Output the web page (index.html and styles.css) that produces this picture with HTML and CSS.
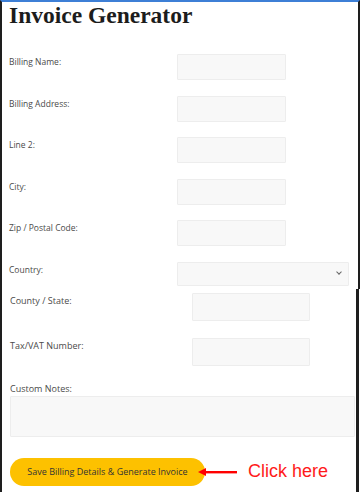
FILE: index.html
```html
<!DOCTYPE html>
<html lang="en">
<head>
    <meta charset="UTF-8">
    <meta name="viewport" content="width=device-width, initial-scale=1.0">
    <title>Invoice Generator</title>
    <link rel="stylesheet" href="styles.css">
</head>
<body>
    <div class="page">
        <section class="panel panel-top">
            <h1 class="title">Invoice Generator</h1>
            <div class="fields">
                <div class="field">
                    <label for="billingName">Billing Name:</label>
                    <input class="input" type="text" id="billingName">
                </div>
                <div class="field">
                    <label for="billingAddress">Billing Address:</label>
                    <input class="input" type="text" id="billingAddress">
                </div>
                <div class="field">
                    <label for="line2">Line 2:</label>
                    <input class="input" type="text" id="line2">
                </div>
                <div class="field">
                    <label for="city">City:</label>
                    <input class="input" type="text" id="city">
                </div>
                <div class="field">
                    <label for="zip">Zip / Postal Code:</label>
                    <input class="input" type="text" id="zip">
                </div>
                <div class="field">
                    <label for="country">Country:</label>
                    <div class="select-wrap">
                        <select class="select" id="country">
                            <option></option>
                        </select>
                    </div>
                </div>
            </div>
        </section>

        <section class="panel panel-bottom">
            <div class="field field-wide">
                <label for="state">County / State:</label>
                <input class="input input-wide" type="text" id="state">
            </div>
            <div class="field field-wide">
                <label for="vat">Tax/VAT Number:</label>
                <input class="input input-wide" type="text" id="vat">
            </div>
            <div class="notes">
                <label for="notes">Custom Notes:</label>
                <textarea class="textarea" id="notes"></textarea>
            </div>
            <div class="actions">
                <button class="save" type="button">Save Billing Details &amp; Generate Invoice</button>
                <svg class="arrow" width="40" height="10" viewBox="0 0 40 10">
                    <path d="M0 5 L8 1 L8 9 Z" fill="#f00"/>
                    <rect x="7" y="4" width="32" height="2.4" fill="#f00"/>
                </svg>
                <span class="hint">Click here</span>
            </div>
        </section>
    </div>
</body>
</html>
```

FILE: styles.css
```css
body {
    margin: 0;
    background-color: #fff;
    font-family: 'Open Sans', sans-serif;
    color: #444;
}

.page {
    width: 360px;
    height: 492px;
    overflow: hidden;
}

.panel {
    box-sizing: border-box;
    background-color: #fff;
}

.panel-top {
    height: 289px;
    overflow: hidden;
    border-top: 2px solid #3d7fd6;
    border-left: 2px solid #1e1e1e;
    border-right: 2px solid #1e1e1e;
    padding: 0 7px;
}

.title {
    margin: 0 0 26px;
    font-family: 'Liberation Serif', serif;
    font-size: 23.5px;
    line-height: 26px;
    font-weight: bold;
    color: #1c1c1c;
}

.field {
    display: grid;
    grid-template-columns: 168px auto;
    align-items: start;
    height: 41.6px;
}

.field label {
    font-size: 8.5px;
    line-height: 14px;
    padding-top: 1px;
    color: #4a4a4a;
}

.input,
.select,
.textarea {
    box-sizing: border-box;
    background-color: #f8f8f8;
    border: 1px solid #ededed;
    border-radius: 1px;
    font-family: 'Open Sans', sans-serif;
    outline: none;
}

.input {
    width: 109px;
    height: 26px;
}

.select-wrap {
    position: relative;
    width: 172px;
}

.select {
    width: 100%;
    height: 24px;
    -webkit-appearance: none;
    appearance: none;
}

.select-wrap::after {
    content: "";
    position: absolute;
    right: 8px;
    top: 8px;
    width: 3px;
    height: 3px;
    border-right: 1px solid #666;
    border-bottom: 1px solid #666;
    transform: rotate(45deg);
}

.panel-bottom {
    width: 359px;
    height: 203px;
    border-left: 2px solid #1e1e1e;
    border-right: 3px solid #1e1e1e;
    padding: 4px 1px 0 8px;
}

.field-wide {
    grid-template-columns: 182px auto;
    height: 45px;
}

.field-wide label {
    font-size: 9px;
}

.input-wide {
    width: 118px;
    height: 27.5px;
}

.notes {
    display: flex;
    flex-direction: column;
}

.notes label {
    font-size: 9px;
    line-height: 12px;
    margin-bottom: 1px;
    color: #4a4a4a;
}

.textarea {
    width: 345px;
    height: 41px;
    resize: none;
}

.actions {
    display: flex;
    align-items: center;
    margin-top: 21px;
}

.save {
    width: 195px;
    height: 27.5px;
    border: none;
    border-radius: 14px;
    background-color: #fdc100;
    color: #333;
    font-family: 'Open Sans', sans-serif;
    font-size: 9px;
    padding: 0;
    cursor: pointer;
}

.arrow {
    margin-left: -7px;
    display: block;
}

.hint {
    margin-left: 10px;
    font-family: 'Liberation Sans', sans-serif;
    font-size: 18px;
    color: #ff1a1a;
}
```
